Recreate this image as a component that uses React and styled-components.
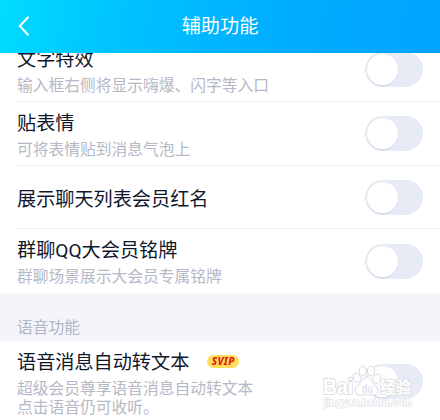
import React, { useState } from 'react'
import styled, { createGlobalStyle } from 'styled-components'

const GlobalStyle = createGlobalStyle`
  * {
    box-sizing: border-box;
  }

  body {
    margin: 0;
    background: #fff;
    font-family: Roboto, "Noto Sans CJK SC", sans-serif;
  }
`

const settings = [
  { id: 'effect', title: '文字特效', desc: '输入框右侧将显示嗨爆、闪字等入口' },
  { id: 'sticker', title: '贴表情', desc: '可将表情贴到消息气泡上' },
  { id: 'redname', title: '展示聊天列表会员红名' },
  { id: 'plate', title: '群聊QQ大会员铭牌', desc: '群聊场景展示大会员专属铭牌' },
]

const Toggle = ({ label }) => {
  const [on, setOn] = useState(false)
  return (
    <Track type="button" role="switch" aria-label={label} aria-checked={on} $on={on} onClick={() => setOn(!on)}>
      <Knob />
    </Track>
  )
}

const Watermark = () => (
  <Mark viewBox="0 0 100 50">
    <g fill="#fff" stroke="#dcdde2" strokeWidth="2" paintOrder="stroke" strokeLinejoin="round">
      <text x="3" y="29" fontSize="22" fontWeight="700" textLength="30" lengthAdjust="spacingAndGlyphs">Bai</text>
      <text x="60" y="28" fontSize="15.500" fontWeight="700" textLength="31" strokeWidth="1.5">经验</text>
      <text x="4" y="40.500" fontSize="10.500" fontWeight="700" textLength="88" lengthAdjust="spacingAndGlyphs" strokeWidth="1.2">jingyan.baidu.com</text>
    </g>
    <g fill="#fff" stroke="#d8dae0" strokeWidth="1">
      <ellipse cx="36.8" cy="12.7" rx="3.6" ry="4.6" transform="rotate(-15 36.8 12.7)" />
      <ellipse cx="42.8" cy="6" rx="3.6" ry="4.9" />
      <ellipse cx="51" cy="6" rx="3.6" ry="4.9" />
      <ellipse cx="56.8" cy="13.6" rx="3.6" ry="4.6" transform="rotate(15 56.8 13.6)" />
      <path d="M47 12c-3 0-4.500 3.500-7 6.400-2.600 2.500-5.800 4.300-5 8.100.8 3.700 5 4.200 8 3.600 2.700-.5 5.300-.5 8 0 3 .6 6.300 0 7-3.700.7-3.600-2.800-5.800-5-8C51.500 16 50 12 47 12z" />
    </g>
    <text x="42" y="28" fontSize="12" fontWeight="700" textLength="11" lengthAdjust="spacingAndGlyphs" fill="#dfe2ec">du</text>
  </Mark>
)

const App = () => {
  return (
    <Page>
      <GlobalStyle />
      <Header>
        <BackButton type="button" aria-label="返回">
          <svg width="12" height="22" viewBox="0 0 12 22" fill="none" stroke="#fff" strokeWidth="2">
            <path d="M10.500 1.800L1.800 11l8.700 9.200" />
          </svg>
        </BackButton>
        <HeaderTitle>辅助功能</HeaderTitle>
      </Header>
      <Content>
        <List>
          {settings.map((item) => (
            <Row key={item.id}>
              <Info>
                <Title>{item.title}</Title>
                {item.desc ? <Desc>{item.desc}</Desc> : null}
              </Info>
              <Toggle label={item.title} />
            </Row>
          ))}
        </List>
        <SectionLabel>语音功能</SectionLabel>
        <VoiceRow>
          <VoiceInfo>
            <Title>
              语音消息自动转文本
              <Badge>SVIP</Badge>
            </Title>
            <VoiceDesc>
              超级会员尊享语音消息自动转文本
              <br />
              点击语音仍可收听。
            </VoiceDesc>
          </VoiceInfo>
          <Toggle label="语音消息自动转文本" />
          <Watermark />
        </VoiceRow>
      </Content>
    </Page>
  )
}

const Page = styled.div`
  width: 440px;
  height: 420px;
  display: flex;
  flex-direction: column;
  overflow: hidden;
  background: #fff;
`

const Header = styled.header`
  height: 53px;
  flex: none;
  display: grid;
  grid-template-columns: 60px 1fr 60px;
  align-items: center;
  background: linear-gradient(100deg, #00dcff 0%, #00c3ff 27%, #00afff 60%, #00a3ff 100%);
`

const BackButton = styled.button`
  height: 50px;
  padding: 0 0 2px 18px;
  display: flex;
  align-items: center;
  border: none;
  background: none;
  cursor: pointer;
`

const HeaderTitle = styled.h1`
  margin: 0;
  padding-top: 1px;
  color: #fff;
  font-size: 19.200px;
  font-weight: 400;
  line-height: 52px;
  text-align: center;
`

const Content = styled.main`
  flex: 1;
  min-height: 0;
  overflow: hidden;
`

/* the list is scrolled a little way under the header */
const List = styled.div`
  margin-top: -15px;
`

const Row = styled.div`
  height: 64px;
  margin-left: 17px;
  padding-right: 17px;
  display: flex;
  align-items: center;
  justify-content: space-between;
  border-bottom: 1px solid #eceef3;

  &:nth-child(3) {
    height: 63px;
  }

  &:last-child {
    border-bottom: none;
  }
`

const VoiceRow = styled.div`
  position: relative;
  height: 80px;
  margin-left: 17px;
  padding-right: 17px;
  display: flex;
  align-items: center;
  justify-content: space-between;
`

const Info = styled.div`
  padding-top: 5px;
  white-space: nowrap;
`

const VoiceInfo = styled(Info)`
  padding-top: 3px;
`

const Title = styled.div`
  display: flex;
  align-items: center;
  color: #10172b;
  font-size: 19.150px;
  line-height: 27px;
`

const Desc = styled.div`
  color: #b5b8c6;
  font-size: 15.750px;
  line-height: 26px;
`

const VoiceDesc = styled(Desc)`
  padding-top: 3px;
  line-height: 19px;
`

const Badge = styled.span`
  width: 32px;
  height: 13px;
  margin: -2px 0 0 18px;
  border-radius: 7px;
  background: #ffdc5c;
  color: #e21b12;
  font-family: "Noto Sans", sans-serif;
  font-size: 10px;
  font-weight: 800;
  font-style: italic;
  letter-spacing: 0.4px;
  line-height: 13px;
  text-align: center;
`

const Track = styled.button`
  width: 58px;
  height: 35px;
  flex: none;
  padding: 2px;
  display: flex;
  align-items: center;
  justify-content: ${({ $on }) => ($on ? 'flex-end' : 'flex-start')};
  border: none;
  border-radius: 18px;
  background: ${({ $on }) => ($on ? '#00b4ff' : '#e7ebf5')};
  cursor: pointer;
`

const Knob = styled.span`
  width: 31px;
  height: 31px;
  border-radius: 50%;
  background: #fff;
  box-shadow: 0 1px 2px rgba(150, 160, 190, 0.25);
`

const SectionLabel = styled.h2`
  height: 48px;
  margin: 0;
  padding: 22px 17px 0;
  background: #f3f5fa;
  color: #b1b5c3;
  font-size: 15.750px;
  font-weight: 400;
  line-height: 26px;
`

const Mark = styled.svg`
  position: absolute;
  top: 24px;
  right: 20px;
  width: 100px;
  height: 50px;
  pointer-events: none;
  font-family: "Liberation Sans", "Noto Sans CJK SC", sans-serif;
`

export default App
